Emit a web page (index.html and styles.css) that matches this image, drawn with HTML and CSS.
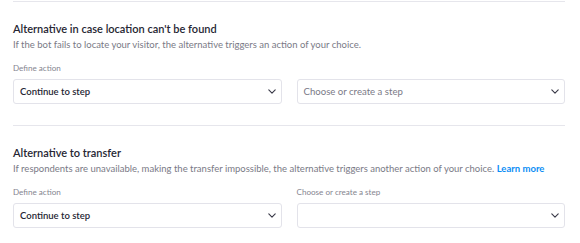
FILE: index.html
```html
<!DOCTYPE html>
<html>
<head>
<meta charset="utf-8">
<link rel="stylesheet" href="styles.css">
</head>
<body>
<div class="page">
  <div class="divider first"></div>
  <section class="block">
    <h2 class="title">Alternative in case location can't be found</h2>
    <p class="desc">If the bot fails to locate your visitor, the alternative triggers an action of your choice.</p>
    <div class="row">
      <div class="field">
        <label class="label">Define action</label>
        <div class="select"><span class="value">Continue to step</span><svg class="chev" viewBox="0 0 10 6"><path d="M1 1l4 4 4-4" fill="none" stroke="#3a3a48" stroke-width="1.4" stroke-linecap="round" stroke-linejoin="round"/></svg></div>
      </div>
      <div class="field">
        <label class="label">&nbsp;</label>
        <div class="select"><span class="placeholder">Choose or create a step</span><svg class="chev" viewBox="0 0 10 6"><path d="M1 1l4 4 4-4" fill="none" stroke="#3a3a48" stroke-width="1.4" stroke-linecap="round" stroke-linejoin="round"/></svg></div>
      </div>
    </div>
  </section>
  <div class="divider"></div>
  <section class="block">
    <h2 class="title">Alternative to transfer</h2>
    <p class="desc">If respondents are unavailable, making the transfer impossible, the alternative triggers another action of your choice. <a class="link" href="#">Learn more</a></p>
    <div class="row">
      <div class="field">
        <label class="label">Define action</label>
        <div class="select"><span class="value">Continue to step</span><svg class="chev" viewBox="0 0 10 6"><path d="M1 1l4 4 4-4" fill="none" stroke="#3a3a48" stroke-width="1.4" stroke-linecap="round" stroke-linejoin="round"/></svg></div>
      </div>
      <div class="field">
        <label class="label">Choose or create a step</label>
        <div class="select"><span class="placeholder"></span><svg class="chev" viewBox="0 0 10 6"><path d="M1 1l4 4 4-4" fill="none" stroke="#3a3a48" stroke-width="1.4" stroke-linecap="round" stroke-linejoin="round"/></svg></div>
      </div>
    </div>
  </section>
</div>
</body>
</html>
```
FILE: styles.css
```css
html, body {
  margin: 0;
  padding: 0;
  background: #ffffff;
}
body {
  font-family: "Lato", "Open Sans", sans-serif;
  color: #2b2b38;
}
.page {
  padding: 0 15px 0 13px;
}
.divider {
  height: 1px;
  background: #e6e6ec;
}
.divider.first {
  margin-top: 1px;
}
.block {
  padding: 19px 0 21px;
}
.title {
  margin: 0;
  font-size: 11px;
  line-height: 16px;
  font-weight: 600;
  color: #262633;
}
.desc {
  margin: 0;
  font-size: 9.5px;
  line-height: 16px;
  color: #7a7a86;
}
.link {
  color: #0b8ef5;
  font-weight: 700;
  text-decoration: none;
}
.row {
  display: grid;
  grid-template-columns: 1fr 1fr;
  column-gap: 15px;
  margin-top: 9px;
}
.field {
  display: flex;
  flex-direction: column;
}
.label {
  font-size: 8.1px;
  line-height: 12px;
  color: #85858f;
  margin-bottom: 5px;
}
.select {
  height: 23px;
  border: 1px solid #e3e3ea;
  border-radius: 3px;
  display: flex;
  align-items: center;
  justify-content: space-between;
  padding: 0 5px 0 6px;
}
.value {
  font-size: 9.5px;
  font-weight: 600;
  color: #262633;
}
.placeholder {
  font-size: 9.6px;
  color: #7a7a86;
}
.chev {
  width: 8px;
  height: 5px;
}
```
